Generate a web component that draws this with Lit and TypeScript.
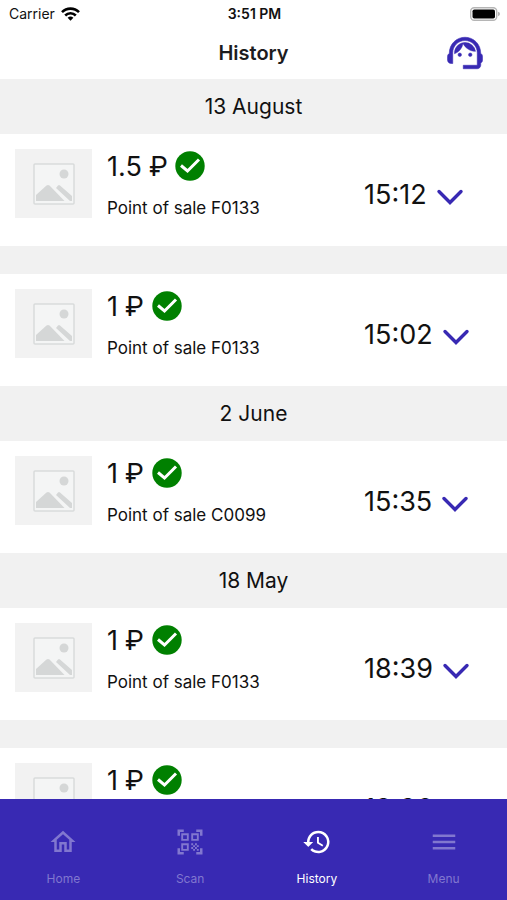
import { LitElement, html, css, svg } from "lit";
import { customElement, property, state } from "lit/decorators.js";
import { classMap } from "lit/directives/class-map.js";

interface Sale {
  amount: string;
  place: string;
  time: string;
}

interface Day {
  label: string;
  sales: Sale[];
}

const DAYS: Day[] = [
  {
    label: "13 August",
    sales: [
      { amount: "1.5", place: "Point of sale F0133", time: "15:12" },
      { amount: "1", place: "Point of sale F0133", time: "15:02" },
    ],
  },
  {
    label: "2 June",
    sales: [{ amount: "1", place: "Point of sale C0099", time: "15:35" }],
  },
  {
    label: "18 May",
    sales: [
      { amount: "1", place: "Point of sale F0133", time: "18:39" },
      { amount: "1", place: "Point of sale F0133", time: "18:36" },
    ],
  },
];

const TABS = [
  {
    label: "Home",
    icon: svg`<path d="M12 5.700l5 4.500V18h-2v-6H9v6H7v-7.800zM12 3L2 12h3v8h6v-6h2v6h6v-8h3z" fill="currentColor"/>`,
  },
  {
    label: "Scan",
    icon: svg`<path d="M9.500 6.500v3h-3v-3zM11 5H5v6h6zm-1.500 9.500v3h-3v-3zM11 13H5v6h6zm6.500-6.500v3h-3v-3zM19 5h-6v6h6zm-6 8h1.500v1.500H13zm1.500 1.500H16V16h-1.500zM16 13h1.500v1.500H16zm-3 3h1.500v1.500H13zm1.500 1.500H16V19h-1.500zM16 16h1.500v1.500H16zm1.500-1.500H19V16h-1.500zm0 3H19V19h-1.500zM22 7h-2V4h-3V2h5zm0 15v-5h-2v3h-3v2zM2 22h5v-2H4v-3H2zM2 2v5h2V4h3V2z" fill="currentColor"/>`,
  },
  {
    label: "History",
    icon: svg`<path d="M13 3a9 9 0 0 0-9 9H1l3.890 3.890.070.140L9 12H6a7 7 0 1 1 2.060 4.940l-1.420 1.420A9 9 0 1 0 13 3zm-1 5v5l4.280 2.540.720-1.210-3.500-2.080V8z" fill="currentColor"/>`,
  },
  {
    label: "Menu",
    icon: svg`<path d="M3 18h18v-2H3zm0-5h18v-2H3zm0-7v2h18V6z" fill="currentColor"/>`,
  },
];

@customElement("sale-row")
export class SaleRow extends LitElement {
  @property({ attribute: false }) sale!: Sale;

  static styles = css`
    :host {
      display: grid;
      grid-template-columns: 77px 1fr 128px;
      column-gap: 15px;
      align-items: start;
      box-sizing: border-box;
      height: 112px;
      padding: 15px 15px 0;
      background: #fff;
    }
    .thumb {
      display: flex;
      align-items: center;
      justify-content: center;
      height: 69px;
      background: #f2f2f2;
    }
    .sum {
      display: flex;
      align-items: center;
      gap: 8px;
      height: 34px;
      font-size: 27px;
    }
    .currency {
      font-family: Roboto, "Noto Sans", sans-serif;
    }
    .place {
      margin: 14px 0 0;
      font-size: 17px;
      line-height: 22px;
    }
    .when {
      display: flex;
      align-items: center;
      height: 90px;
      gap: 9px;
      font-size: 27px;
    }
    .more {
      display: flex;
      padding: 6px 0 0;
      border: 0;
      background: none;
      color: #3829b3;
    }
  `;

  render() {
    return html`
      <div class="thumb">
        <svg width="42" height="42" viewBox="0 0 42 42" aria-hidden="true">
          <rect x="1" y="1" width="40" height="40" rx="1" fill="#f4f5f5" stroke="#d9dbdb" stroke-width="1.500" />
          <circle cx="31" cy="11" r="4.500" fill="#d5d7d7" />
          <path d="M3 38v-6l10.500-9.500q1.500-1 3 0L31.500 38z" fill="#d5d7d7" />
          <path d="M23 25l2-2.500q1-1 2 0L39 33v5h-2z" fill="#d5d7d7" />
        </svg>
      </div>
      <div>
        <div class="sum">
          <span>${this.sale.amount} <span class="currency">₽</span></span>
          <svg width="30" height="30" viewBox="0 0 30 30" role="img" aria-label="Paid">
            <circle cx="15" cy="15" r="14.700" fill="#008000" />
            <path d="M6 14.500l6.500 5.500L24 8.500" fill="none" stroke="#fff" stroke-width="3" />
          </svg>
        </div>
        <p class="place">${this.sale.place}</p>
      </div>
      <div class="when">
        <time>${this.sale.time}</time>
        <button class="more" aria-label="Show details">
          <svg width="28" height="18" viewBox="0 0 28 18">
            <path d="M3 3.500l11 11 11-11" fill="none" stroke="currentColor" stroke-width="3.400" stroke-linecap="round" />
          </svg>
        </button>
      </div>
    `;
  }
}

@customElement("app-root")
export class AppRoot extends LitElement {
  @state() private active = "History";

  static styles = css`
    :host {
      display: flex;
      flex-direction: column;
      height: 100vh;
      overflow: hidden;
      background: #fff;
      color: #111;
      font-family: Inter, "Liberation Sans", sans-serif;
    }
    .status,
    .title-bar {
      display: grid;
      grid-template-columns: 1fr auto 1fr;
      align-items: center;
      flex: none;
    }
    .status {
      height: 27px;
      padding: 0 7px 0 9px;
      font-size: 14px;
    }
    .carrier {
      display: flex;
      align-items: center;
      gap: 6px;
    }
    .clock {
      font-weight: 600;
    }
    .battery {
      justify-self: end;
    }
    .title-bar {
      height: 52px;
      padding: 0 21px;
    }
    .title {
      grid-column: 2;
      margin: 0;
      font-size: 20px;
      font-weight: 600;
      color: #1c1c1e;
    }
    .support {
      display: flex;
      justify-self: end;
      padding: 0;
      border: 0;
      background: none;
      color: #3829b3;
    }
    .list {
      flex: 1;
      min-height: 0;
      overflow: hidden;
      background: #f1f1f1;
    }
    .day {
      margin: 0;
      font-size: 21px;
      font-weight: 400;
      line-height: 55px;
      text-align: center;
    }
    .sales {
      display: flex;
      flex-direction: column;
      gap: 28px;
    }
    .tabs {
      display: flex;
      flex: none;
      height: 101px;
      background: #3829b3;
    }
    .tab {
      display: flex;
      flex: 1;
      flex-direction: column;
      align-items: center;
      gap: 14px;
      padding: 28px 0 0;
      border: 0;
      background: none;
      color: #8177cf;
      font: inherit;
      font-size: 12px;
      line-height: 16px;
    }
    .active {
      color: #fff;
    }
  `;

  render() {
    return html`
      <div class="status">
        <span class="carrier">
          Carrier
          <svg width="19" height="14" viewBox="0 0 19 14" aria-hidden="true">
            <g fill="none" stroke="#000" stroke-width="2.600">
              <path d="M1 5.200a12 12 0 0 1 17 0" />
              <path d="M4.200 8.500a7.500 7.500 0 0 1 10.600 0" />
            </g>
            <path d="M6.600 10.800a4.200 4.200 0 0 1 5.800 0L9.500 13.800z" />
          </svg>
        </span>
        <span class="clock">3:51 PM</span>
        <svg class="battery" width="30" height="14" viewBox="0 0 30 14" role="img" aria-label="Battery full">
          <rect x="0.700" y="0.700" width="26" height="12.600" rx="3.500" fill="#fff" stroke="#b5b5b5" stroke-width="1.400" />
          <rect x="2.500" y="2.500" width="22.500" height="9" rx="1.800" />
          <path d="M28 4.800q2 .6 2 2.200t-2 2.200z" fill="#b5b5b5" />
        </svg>
      </div>
      <header class="title-bar">
        <h1 class="title">History</h1>
        <button class="support" aria-label="Support">
          <svg width="42" height="42" viewBox="0 0 24 24" fill="currentColor" stroke="currentColor" stroke-width="0.300">
            <path d="M21 12.220C21 6.730 16.740 3 12 3c-4.690 0-9 3.650-9 9.280-.6.340-1 .980-1 1.720v2c0 1.100.9 2 2 2h1v-6.100c0-3.870 3.130-7 7-7s7 3.130 7 7V19h-8v2h8c1.100 0 2-.9 2-2v-1.220c.590-.310 1-.920 1-1.640v-2.300c0-.7-.410-1.310-1-1.620z" />
            <circle cx="9" cy="13" r="1" />
            <circle cx="15" cy="13" r="1" />
            <path d="M18 11.030A6.040 6.040 0 0 0 12.050 6c-3.030 0-6.290 2.510-6.030 6.450a8.075 8.075 0 0 0 4.860-5.890c1.310 2.630 4 4.440 7.120 4.470z" />
          </svg>
        </button>
      </header>
      <main class="list">
        ${DAYS.map(
          (day) => html`
            <section>
              <h2 class="day">${day.label}</h2>
              <div class="sales">
                ${day.sales.map((sale) => html`<sale-row .sale=${sale}></sale-row>`)}
              </div>
            </section>
          `
        )}
      </main>
      <nav class="tabs">
        ${TABS.map(
          (tab) => html`
            <button
              class=${classMap({ tab: true, active: tab.label === this.active })}
              @click=${() => (this.active = tab.label)}
            >
              <svg width="30" height="30" viewBox="0 0 24 24" aria-hidden="true">${tab.icon}</svg>
              ${tab.label}
            </button>
          `
        )}
      </nav>
    `;
  }
}
